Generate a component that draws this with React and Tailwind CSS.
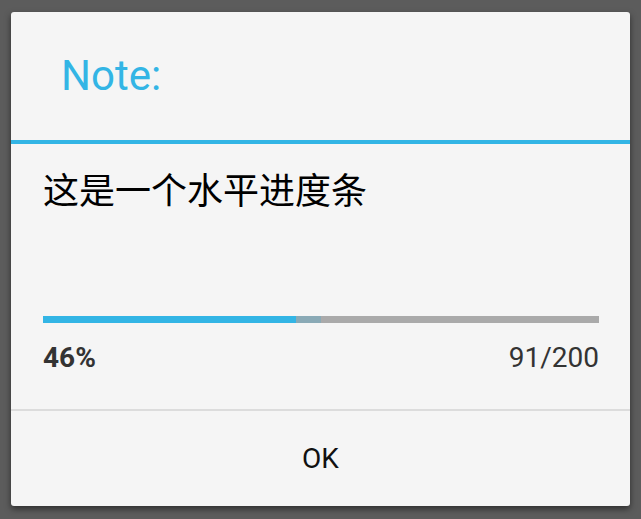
export default function App() {
  const progress = 91;
  const max = 200;
  const secondary = 100;
  const pct = Math.round((progress / max) * 100);
  return (
    <div
      className="w-[641px] h-[519px] bg-[#5c5c5c] pt-[12px] pl-[11px] overflow-hidden"
      style={{ fontFamily: 'Roboto, "Noto Sans CJK SC", sans-serif' }}
    >
      <div className="w-[619px] h-[494px] bg-[#f5f5f5] rounded-[3px] flex flex-col shadow-[0_3px_6px_rgba(0,0,0,0.5)]">
        <div className="h-[128px] flex items-center pl-[50px]">
          <span className="text-[42px] leading-none text-[#33b5e5]">Note:</span>
        </div>
        <div className="h-[4px] bg-[#33b5e5]" />
        <div className="h-[265px] flex flex-col px-[32px] pt-[26px]">
          <div
            className="text-[36px] leading-[36px] text-black"
            style={{ fontFamily: '"Noto Sans CJK SC", Roboto, sans-serif' }}
          >
            这是一个水平进度条
          </div>
          <div className="mt-[110px] h-[7px] bg-[#aaaaaa] relative w-[556px]">
            <div
              className="absolute left-0 top-0 h-full bg-[#8aaab6]"
              style={{ width: `${(secondary / max) * 100}%` }}
            />
            <div
              className="absolute left-0 top-0 h-full bg-[#33b5e5]"
              style={{ width: `${(progress / max) * 100}%` }}
            />
          </div>
          <div className="mt-[19px] w-[556px] flex justify-between text-[28px] leading-[32px] text-[#333333]">
            <span className="font-bold">{pct}%</span>
            <span>
              {progress}/{max}
            </span>
          </div>
        </div>
        <div className="h-[2px] bg-[#dcdcdc]" />
        <div className="flex-1 flex items-center justify-center">
          <span className="text-[28px] leading-none text-[#111111]">OK</span>
        </div>
      </div>
    </div>
  );
}
